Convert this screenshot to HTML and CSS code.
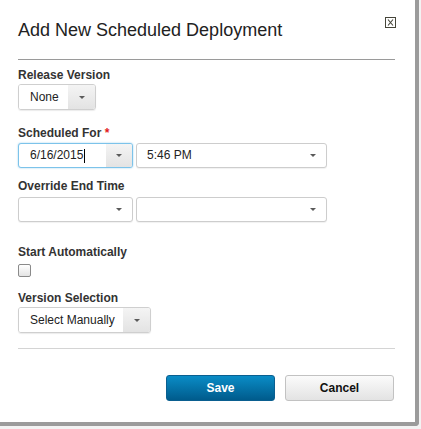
FILE: index.html
```html
<!DOCTYPE html>
<html>
<head>
<meta charset="utf-8">
<link rel="stylesheet" href="styles.css">
</head>
<body>
<div class="dialog">
  <div class="header">
    <div class="title">Add New Scheduled Deployment</div>
    <div class="close">
      <svg width="11" height="11" viewBox="0 0 11 11">
        <rect x="0.5" y="0.5" width="10" height="10" fill="none" stroke="#45453a" stroke-width="1"/>
        <path d="M3 2.5 L8 8.5 M8 2.5 L3 8.5" stroke="#45453a" stroke-width="1.1" fill="none"/>
      </svg>
    </div>
  </div>
  <div class="form">
    <div class="group g1">
      <div class="label">Release Version</div>
      <div class="selectbtn w-none">
        <span class="sb-text">None</span>
        <span class="sb-arrow"><i class="tri"></i></span>
      </div>
    </div>
    <div class="group g2">
      <div class="label">Scheduled For <span class="req">*</span></div>
      <div class="row">
        <div class="combo date focus">
          <span class="cb-text">6/16/2015<span class="caret"></span></span>
          <span class="cb-arrow gray"><i class="tri"></i></span>
        </div>
        <div class="combo time">
          <span class="cb-text time-text">5:46 PM</span>
          <span class="cb-arrow"><i class="tri"></i></span>
        </div>
      </div>
    </div>
    <div class="group g3">
      <div class="label">Override End Time</div>
      <div class="row">
        <div class="combo date">
          <span class="cb-text"></span>
          <span class="cb-arrow"><i class="tri"></i></span>
        </div>
        <div class="combo time">
          <span class="cb-text"></span>
          <span class="cb-arrow"><i class="tri"></i></span>
        </div>
      </div>
    </div>
    <div class="group g4">
      <div class="label">Start Automatically</div>
      <div class="checkbox"></div>
    </div>
    <div class="group g5">
      <div class="label">Version Selection</div>
      <div class="selectbtn w-manual">
        <span class="sb-text">Select Manually</span>
        <span class="sb-arrow"><i class="tri"></i></span>
      </div>
    </div>
  </div>
  <div class="footer">
    <button class="btn primary">Save</button>
    <button class="btn secondary">Cancel</button>
  </div>
</div>
</body>
</html>
```

FILE: styles.css
```css
html, body {
  margin: 0;
  padding: 0;
}
body {
  background: #f3f3f3;
  font-family: "Liberation Sans", Arial, sans-serif;
  width: 421px;
  height: 429px;
  overflow: hidden;
}
.dialog {
  box-sizing: border-box;
  width: 419px;
  height: 426px;
  background: #fff;
  border-right: 4px solid #9b9b9b;
  border-bottom: 4px solid #9b9b9b;
  border-bottom-right-radius: 4px;
  padding: 0 20px 0 18px;
  position: relative;
}
.header {
  display: flex;
  justify-content: space-between;
  align-items: flex-start;
  padding-top: 18px;
  padding-bottom: 17px;
  border-bottom: 1px solid #9a9a9a;
}
.title {
  font-size: 18px;
  line-height: 24px;
  color: #222;
}
.close {
  width: 11px;
  height: 11px;
  margin-top: -1px;
  margin-right: -1px;
  line-height: 0;
}
.form {
  padding-top: 8px;
}
.label {
  font-size: 12px;
  line-height: 14px;
  font-weight: bold;
  color: #333;
}
.req {
  color: #e21b1b;
}
.g1 .label { margin-bottom: 2px; }
.g2 { margin-top: 16px; }
.g2 .label { margin-bottom: 3px; }
.g3 { margin-top: 11px; }
.g3 .label { margin-bottom: 4px; }
.g4 { margin-top: 23px; }
.g4 .label { margin-bottom: 5px; }
.g5 { margin-top: 14px; }
.g5 .label { margin-bottom: 2px; }

.selectbtn {
  display: flex;
  box-sizing: border-box;
  height: 26px;
  border: 1px solid #cfcfcf;
  border-radius: 3px;
  box-shadow: 0 1px 1px rgba(0,0,0,0.08);
  overflow: hidden;
  font-size: 12px;
  color: #222;
}
.w-none { width: 78px; }
.w-manual { width: 133px; }
.sb-text {
  flex: 1;
  padding-left: 11px;
  line-height: 24px;
  background: #fff;
}
.sb-arrow {
  width: 27px;
  display: flex;
  align-items: center;
  justify-content: center;
  background: linear-gradient(#f4f4f4, #e3e3e3);
}
.tri {
  display: block;
  width: 0;
  height: 0;
  border-left: 3.5px solid transparent;
  border-right: 3.5px solid transparent;
  border-top: 3px solid #5a5a5a;
}
.row {
  display: flex;
  gap: 3px;
}
.combo {
  display: flex;
  box-sizing: border-box;
  height: 25px;
  border: 1px solid #cdcdcd;
  border-radius: 3px;
  box-shadow: 0 1px 1px rgba(0,0,0,0.06);
  overflow: hidden;
  font-size: 12px;
  color: #222;
  background: #fff;
}
.combo.date { width: 115px; }
.combo.time { width: 191px; }
.combo.focus {
  border-color: #7cc3ea;
  box-shadow: 0 0 2px rgba(110, 185, 230, 0.7);
}
.cb-text {
  flex: 1;
  padding-left: 11px;
  line-height: 23px;
  display: flex;
  align-items: center;
}
.time-text {
  padding-left: 10px;
}
.caret {
  display: inline-block;
  width: 1px;
  height: 14px;
  background: #000;
  margin-left: 1px;
}
.cb-arrow {
  width: 26px;
  display: flex;
  align-items: center;
  justify-content: center;
}
.cb-arrow.gray {
  background: linear-gradient(#f4f4f4, #e3e3e3);
}
.checkbox {
  box-sizing: border-box;
  width: 13px;
  height: 13px;
  border: 1px solid #8a8a8a;
  border-radius: 2px;
  background: linear-gradient(#ffffff, #e4e4e4);
}
.footer {
  margin-top: 15px;
  border-top: 1px solid #d4d4d4;
  padding-top: 26px;
  display: flex;
  justify-content: flex-end;
  gap: 10px;
  padding-right: 1px;
}
.btn {
  box-sizing: border-box;
  width: 109px;
  height: 26px;
  border-radius: 3px;
  font-family: "Liberation Sans", Arial, sans-serif;
  font-size: 12px;
  font-weight: bold;
  padding: 0;
  margin: 0;
}
.primary {
  color: #fff;
  background: linear-gradient(#0a8cc6, #005b8c);
  border: 1px solid #0a5f90;
}
.secondary {
  color: #111;
  background: linear-gradient(#fbfbfb, #e3e3e3);
  border: 1px solid #c2c2c2;
}
```
